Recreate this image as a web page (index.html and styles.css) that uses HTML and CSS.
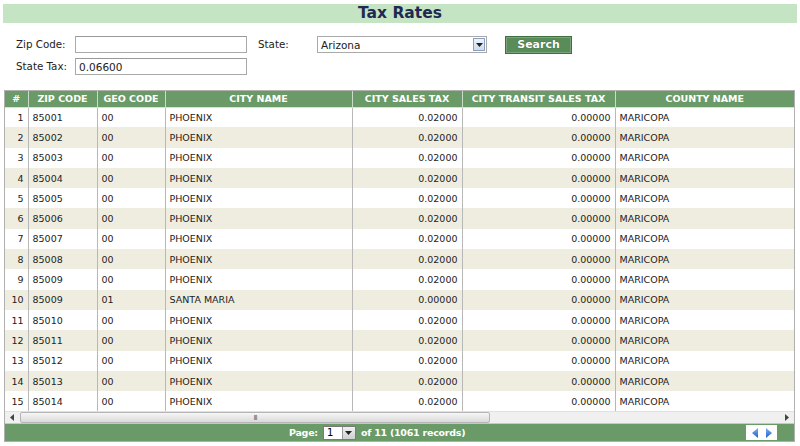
FILE: index.html
```html
<!DOCTYPE html>
<html>
<head>
<meta charset="utf-8">
<link rel="stylesheet" href="styles.css">
</head>
<body>
<div class="page">
  <div class="title">Tax Rates</div>
  <div class="form">
    <div class="row">
      <label class="lbl">Zip Code:</label>
      <div class="input"></div>
      <label class="lbl state-lbl">State:</label>
      <div class="select"><span>Arizona</span><span class="dd"><svg width="7" height="4" viewBox="0 0 7 4"><path d="M0 0h7L3.5 4z" fill="#222"/></svg></span></div>
      <div class="btn">Search</div>
    </div>
    <div class="row">
      <label class="lbl">State Tax:</label>
      <div class="input">0.06600</div>
    </div>
  </div>
  <div class="grid">
    <table>
      <colgroup>
        <col class="c1"><col class="c2"><col class="c3"><col class="c4"><col class="c5"><col class="c6"><col class="c7">
      </colgroup>
      <thead>
        <tr><th>#</th><th>ZIP CODE</th><th>GEO CODE</th><th>CITY NAME</th><th>CITY SALES TAX</th><th>CITY TRANSIT SALES TAX</th><th>COUNTY NAME</th></tr>
      </thead>
      <tbody>
        <tr><td class="r">1</td><td>85001</td><td>00</td><td>PHOENIX</td><td class="r">0.02000</td><td class="r">0.00000</td><td>MARICOPA</td></tr>
        <tr class="alt"><td class="r">2</td><td>85002</td><td>00</td><td>PHOENIX</td><td class="r">0.02000</td><td class="r">0.00000</td><td>MARICOPA</td></tr>
        <tr><td class="r">3</td><td>85003</td><td>00</td><td>PHOENIX</td><td class="r">0.02000</td><td class="r">0.00000</td><td>MARICOPA</td></tr>
        <tr class="alt"><td class="r">4</td><td>85004</td><td>00</td><td>PHOENIX</td><td class="r">0.02000</td><td class="r">0.00000</td><td>MARICOPA</td></tr>
        <tr><td class="r">5</td><td>85005</td><td>00</td><td>PHOENIX</td><td class="r">0.02000</td><td class="r">0.00000</td><td>MARICOPA</td></tr>
        <tr class="alt"><td class="r">6</td><td>85006</td><td>00</td><td>PHOENIX</td><td class="r">0.02000</td><td class="r">0.00000</td><td>MARICOPA</td></tr>
        <tr><td class="r">7</td><td>85007</td><td>00</td><td>PHOENIX</td><td class="r">0.02000</td><td class="r">0.00000</td><td>MARICOPA</td></tr>
        <tr class="alt"><td class="r">8</td><td>85008</td><td>00</td><td>PHOENIX</td><td class="r">0.02000</td><td class="r">0.00000</td><td>MARICOPA</td></tr>
        <tr><td class="r">9</td><td>85009</td><td>00</td><td>PHOENIX</td><td class="r">0.02000</td><td class="r">0.00000</td><td>MARICOPA</td></tr>
        <tr class="alt"><td class="r">10</td><td>85009</td><td>01</td><td>SANTA MARIA</td><td class="r">0.00000</td><td class="r">0.00000</td><td>MARICOPA</td></tr>
        <tr><td class="r">11</td><td>85010</td><td>00</td><td>PHOENIX</td><td class="r">0.02000</td><td class="r">0.00000</td><td>MARICOPA</td></tr>
        <tr class="alt"><td class="r">12</td><td>85011</td><td>00</td><td>PHOENIX</td><td class="r">0.02000</td><td class="r">0.00000</td><td>MARICOPA</td></tr>
        <tr><td class="r">13</td><td>85012</td><td>00</td><td>PHOENIX</td><td class="r">0.02000</td><td class="r">0.00000</td><td>MARICOPA</td></tr>
        <tr class="alt"><td class="r">14</td><td>85013</td><td>00</td><td>PHOENIX</td><td class="r">0.02000</td><td class="r">0.00000</td><td>MARICOPA</td></tr>
        <tr><td class="r">15</td><td>85014</td><td>00</td><td>PHOENIX</td><td class="r">0.02000</td><td class="r">0.00000</td><td>MARICOPA</td></tr>
      </tbody>
    </table>
    <div class="hscroll">
      <span class="arr"><svg width="4" height="7" viewBox="0 0 4 7"><path d="M4 0v7L0 3.5z" fill="#444"/></svg></span>
      <div class="track"><div class="thumb"><span class="grip">III</span></div></div>
      <span class="arr"><svg width="4" height="7" viewBox="0 0 4 7"><path d="M0 0v7l4-3.5z" fill="#444"/></svg></span>
    </div>
    <div class="pager">
      <div class="pinfo">
        <span>Page:</span>
        <span class="psel"><span class="pval">1</span><span class="pdd"><svg width="7" height="4" viewBox="0 0 7 4"><path d="M0 0h7L3.5 4z" fill="#222"/></svg></span></span>
        <span>of 11 (1061 records)</span>
      </div>
      <div class="nav">
        <svg width="6" height="10" viewBox="0 0 6 10"><defs><linearGradient id="ga" x1="0" y1="0" x2="0" y2="1"><stop offset="0" stop-color="#7fb0f0"/><stop offset="1" stop-color="#1f5fc8"/></linearGradient></defs><path d="M6 0v10L0 5z" fill="url(#ga)"/></svg>
        <svg width="6" height="10" viewBox="0 0 6 10"><path d="M0 0v10l6-5z" fill="url(#ga)"/></svg>
      </div>
    </div>
  </div>
</div>
</body>
</html>
```
FILE: styles.css
```css
* { box-sizing: border-box; }
html, body { margin: 0; padding: 0; background: #fff; }
body { font-family: "DejaVu Sans", Verdana, sans-serif; font-size: 10px; color: #222; }
.page { padding: 4px 3px 0 3px; }
.title {
  background: #c4e4c4;
  height: 19px;
  line-height: 19px;
  text-align: center;
  font-weight: bold;
  font-size: 15.5px;
  color: #1e2a50;
}
.form { padding: 13px 0 0 13px; display: flex; flex-direction: column; gap: 5px; }
.row { display: flex; align-items: flex-start; height: 17px; }
.lbl { width: 59px; padding-top: 2px; font-size: 10.3px; color: #222; }
.input {
  width: 172px; height: 17px;
  border: 1px solid #a9a9a9; border-top-color: #999;
  background: #fff; padding: 2px 0 0 3px; font-size: 10.5px;
}
.state-lbl { margin-left: 11px; }
.select {
  width: 170px; height: 17px; border: 1px solid #a9a9a9; background: #fff;
  display: flex; justify-content: space-between; align-items: center; padding: 0 1px 0 3px; font-size: 10.5px;
}
.dd {
  width: 12px; height: 13px; border: 1px solid #8aa0c0; background: linear-gradient(#eef3fa, #cfdbeb);
  display: flex; align-items: center; justify-content: center;
}
.btn {
  margin-left: 18px; width: 67px; height: 18px; background: #5a8c5a;
  border: 1px solid #3f6e3f; box-shadow: inset 0 0 0 1px #7aa57a;
  color: #fff; font-weight: bold; font-size: 11px; text-align: center; line-height: 16px;
  text-shadow: 0 0 1px #224422;
}
.grid { margin: 15px 2px 0 1px; border: 1px solid #b0b0b0; }
table { border-collapse: collapse; table-layout: fixed; width: 100%; }
col.c1 { width: 23px; } col.c2 { width: 69px; } col.c3 { width: 68px; } col.c4 { width: 187px; }
col.c5 { width: 110px; } col.c6 { width: 153px; } col.c7 { width: auto; }
th {
  background: #699a67; color: #fff; font-weight: bold; font-size: 9.5px;
  height: 16px; padding: 0 2px; text-align: center; white-space: nowrap; overflow: hidden;
  border-left: 1px solid #c8dcc6; border-bottom: 1px solid #dcdcdc;
}
th:first-child { border-left: none; }
td {
  height: 20.3px; padding: 0 4px; font-size: 9.5px; white-space: nowrap; overflow: hidden;
  border-left: 1px solid #b8b8b8; color: #222;
}
td:first-child { border-left: none; }
td.r { text-align: right; }
tr.alt td { background: #efeddf; }
.hscroll { display: flex; height: 12px; background: #f0f0f0; border-top: 1px solid #e0e0e0; align-items: center; }
.arr { width: 14px; display: flex; justify-content: center; align-items: center; }
.track { flex: 1; height: 11px; display: flex; align-items: center; }
.thumb {
  width: 470px; height: 11px; margin-left: 1px; background: linear-gradient(#f6f6f6, #dadada);
  border: 1px solid #b5b5b5; border-radius: 2px; display: flex; justify-content: center; align-items: center;
  font-size: 7px; color: #666; letter-spacing: -1px;
}
.pager {
  height: 18px; background: #699a67; border-top: 1px solid #c8c8c8;
  display: flex; align-items: center; position: relative;
}
.pinfo {
  margin-left: 284px; display: flex; align-items: center; gap: 3px;
  color: #fff; font-weight: bold; font-size: 9.5px; letter-spacing: -0.25px;
}
.psel { display: flex; height: 14px; background: #fff; border: 1px solid #7a7a7a; width: 33px; margin: 0 2px; }
.pval { flex: 1; color: #000; font-weight: normal; padding-left: 3px; line-height: 12px; font-size: 10px; letter-spacing: 0; }
.pdd { width: 13px; background: linear-gradient(#f0f0f0, #cfcfcf); border-left: 1px solid #999; display: flex; justify-content: center; align-items: center; }
.nav {
  position: absolute; left: 741px; top: 1px; width: 31px; height: 15px; background: #fff;
  display: flex; align-items: center; justify-content: center; gap: 8px;
}
```
